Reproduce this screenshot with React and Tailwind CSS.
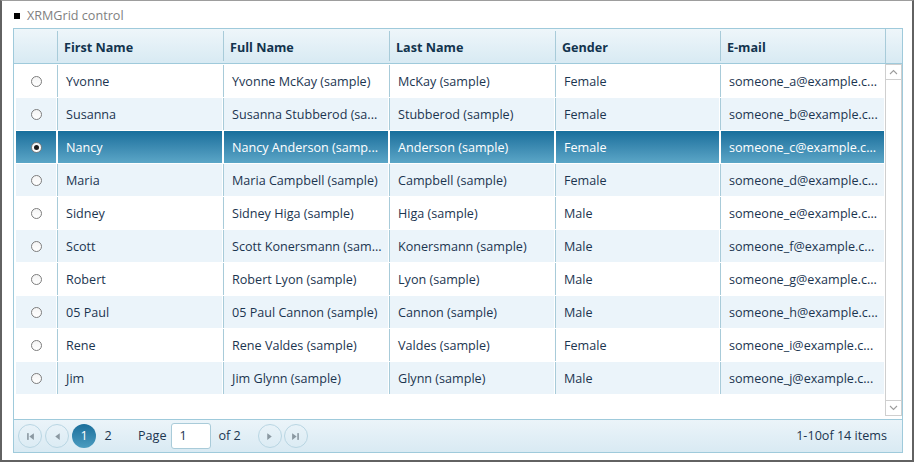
import React from 'react';

const ROWS = [
  ['Yvonne', 'Yvonne McKay (sample)', 'McKay (sample)', 'Female', 'someone_a@example.c...'],
  ['Susanna', 'Susanna Stubberod (sa...', 'Stubberod (sample)', 'Female', 'someone_b@example.c...'],
  ['Nancy', 'Nancy Anderson (samp...', 'Anderson (sample)', 'Female', 'someone_c@example.c...'],
  ['Maria', 'Maria Campbell (sample)', 'Campbell (sample)', 'Female', 'someone_d@example.c...'],
  ['Sidney', 'Sidney Higa (sample)', 'Higa (sample)', 'Male', 'someone_e@example.c...'],
  ['Scott', 'Scott Konersmann (sam...', 'Konersmann (sample)', 'Male', 'someone_f@example.c...'],
  ['Robert', 'Robert Lyon (sample)', 'Lyon (sample)', 'Male', 'someone_g@example.c...'],
  ['05 Paul', '05 Paul Cannon (sample)', 'Cannon (sample)', 'Male', 'someone_h@example.c...'],
  ['Rene', 'Rene Valdes (sample)', 'Valdes (sample)', 'Female', 'someone_i@example.c...'],
  ['Jim', 'Jim Glynn (sample)', 'Glynn (sample)', 'Male', 'someone_j@example.c...'],
];

const HEADERS = ['First Name', 'Full Name', 'Last Name', 'Gender', 'E-mail'];
const HEAD_W = ['w-[166px]', 'w-[166px]', 'w-[166px]', 'w-[165px]', 'w-[165px]'];
const CELL_W = ['w-[165px]', 'w-[165px]', 'w-[165px]', 'w-[164px]', 'w-[164px]'];
const SELECTED = 2;

function Radio({ checked }) {
  return (
    <span className="w-[11px] h-[11px] rounded-full border border-[#7d7d7d] bg-gradient-to-b from-[#f4f4f4] to-white flex items-center justify-center">
      {checked && <span className="w-[5px] h-[5px] rounded-full bg-[#1c1c1c]" />}
    </span>
  );
}

function PagerButton({ children }) {
  return (
    <span className="w-[24px] h-[24px] rounded-full border border-[#b9d6e3] flex items-center justify-center text-[#8f9ca4]">
      {children}
    </span>
  );
}

export default function App() {
  return (
    <div
      className="w-[914px] h-[462px] bg-white border-2 border-t border-[#626262] border-t-[#9d9d9d] text-[12.6px]"
      style={{ fontFamily: '"Open Sans", "Noto Sans", sans-serif' }}
    >
      <div className="h-[27px] flex items-center pl-[12px] pt-[3px] gap-[7px]">
        <span className="w-[6px] h-[6px] bg-black" />
        <span className="text-[#7f7f7f]">XRMGrid control</span>
      </div>

      <div className="ml-[11px] w-[890px] h-[425px] border border-[#9fcadb] flex flex-col">
        {/* header */}
        <div className="h-[35px] flex border-b border-[#9fcadb] bg-gradient-to-b from-[#eef6fa] to-[#d8eaf3] font-bold text-[#12344e]">
          <div className="w-[43px]" />
          {HEADERS.map((h, i) => (
            <div key={h} className={`${HEAD_W[i]} border-l border-[#a8cbd9] flex items-center pl-[6px] pt-[4px] my-[2px]`}>
              {h}
            </div>
          ))}
          <div className="w-[17px] border-l border-[#a8cbd9]" />
        </div>

        {/* body */}
        <div className="flex-1 flex">
          <div className="flex-1 flex flex-col gap-px pt-px pl-[2px]">
            {ROWS.map((r, ri) => {
              const sel = ri === SELECTED;
              const bg = sel
                ? 'bg-gradient-to-b from-[#176f9c] to-[#5ba6c7] text-white'
                : ri % 2 === 1
                  ? 'bg-[#ebf4fa] text-[#1b3550]'
                  : 'bg-white text-[#1b3550]';
              return (
                <div key={ri} className="h-[32px] flex gap-px">
                  <div className={`w-[40px] flex items-center justify-center ${bg}`}>
                    <Radio checked={sel} />
                  </div>
                  {r.map((c, ci) => (
                    <div
                      key={ci}
                      className={`${CELL_W[ci]} ${bg} border-l ${sel ? 'border-white' : 'border-[#a8cbd9]'} flex items-center pl-[8px] pt-[3px] whitespace-nowrap overflow-hidden`}
                    >
                      {c}
                    </div>
                  ))}
                </div>
              );
            })}
          </div>

          {/* scrollbar */}
          <div className="w-[17px] h-[352px] border-x border-[#cfcfcf] flex flex-col justify-between">
            <div className="h-[16px] border-y border-[#cfcfcf] flex items-center justify-center">
              <svg width="9" height="6" viewBox="0 0 9 6" fill="none" stroke="#9c9c9c" strokeWidth="1.1">
                <path d="M1 5 L4.5 1.5 L8 5" />
              </svg>
            </div>
            <div className="h-[16px] border-y border-[#cfcfcf] flex items-center justify-center">
              <svg width="9" height="6" viewBox="0 0 9 6" fill="none" stroke="#9c9c9c" strokeWidth="1.1">
                <path d="M1 1 L4.5 4.5 L8 1" />
              </svg>
            </div>
          </div>
        </div>

        {/* pager */}
        <div className="h-[33px] border-t border-[#9fcadb] bg-gradient-to-b from-[#ebf4f9] to-[#d9eaf3] flex items-center pl-[4px] pr-[15px] text-[#1b3550]">
          <div className="flex items-center gap-[3px]">
            <PagerButton>
              <svg width="9" height="9" viewBox="0 0 8 8" fill="#8a98a1">
                <rect x="1" y="1" width="1.4" height="6" />
                <path d="M7 1 L7 7 L3 4 Z" />
              </svg>
            </PagerButton>
            <PagerButton>
              <svg width="9" height="9" viewBox="0 0 8 8" fill="#8a98a1">
                <path d="M6 1 L6 7 L2 4 Z" />
              </svg>
            </PagerButton>
          </div>
          <span className="ml-[3px] w-[24px] h-[24px] rounded-full bg-gradient-to-b from-[#1a6f9b] to-[#4b9cc0] text-white flex items-center justify-center">
            1
          </span>
          <span className="w-[24px] text-center">2</span>
          <span className="ml-[18px]">Page</span>
          <span className="ml-[5px] w-[40px] h-[26px] bg-white border border-[#a9cbd9] rounded-[3px] flex items-center pl-[7px]">1</span>
          <span className="ml-[7px]">of 2</span>
          <div className="ml-[17px] flex items-center gap-[2px]">
            <PagerButton>
              <svg width="9" height="9" viewBox="0 0 8 8" fill="#8a98a1">
                <path d="M2 1 L2 7 L6 4 Z" />
              </svg>
            </PagerButton>
            <PagerButton>
              <svg width="9" height="9" viewBox="0 0 8 8" fill="#8a98a1">
                <path d="M1 1 L1 7 L5 4 Z" />
                <rect x="5.6" y="1" width="1.4" height="6" />
              </svg>
            </PagerButton>
          </div>
          <span className="ml-auto">1-10of 14 items</span>
        </div>
      </div>
    </div>
  );
}
